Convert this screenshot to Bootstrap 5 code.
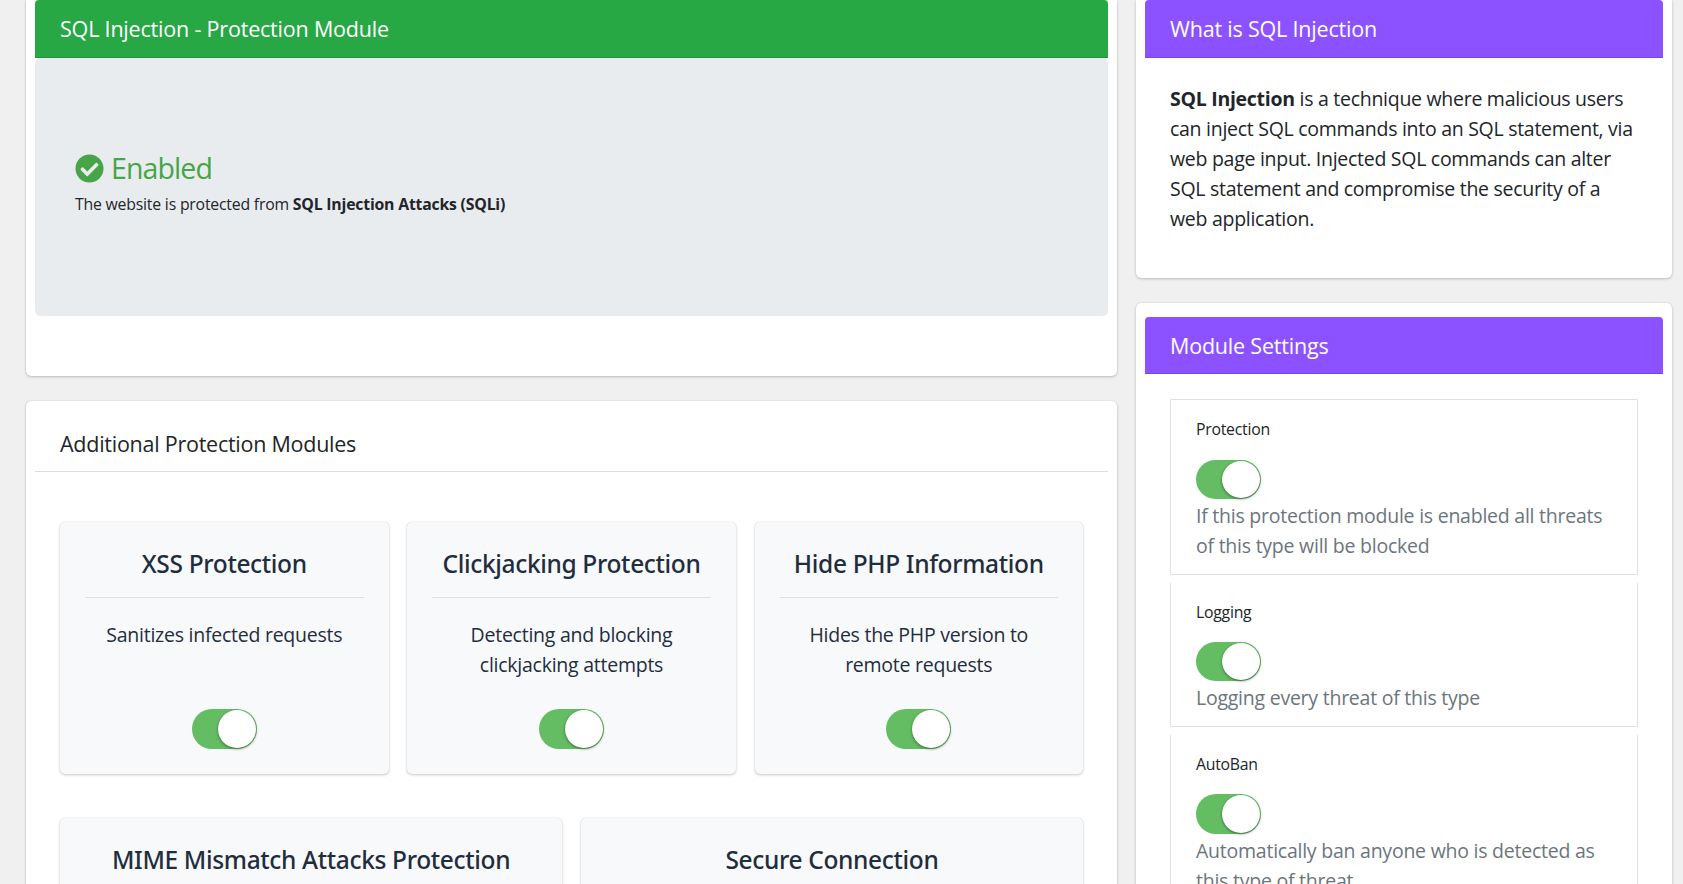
<!DOCTYPE html>
<html lang="en">
<head>
<meta charset="utf-8">
<meta name="viewport" content="width=device-width, initial-scale=1">
<title>SQL Injection - Protection Module</title>
<link href="https://cdn.jsdelivr.net/npm/bootstrap@5.3.0/dist/css/bootstrap.min.css" rel="stylesheet">
<style>
  body { background: #f0f0f0; color: #212529; font: 400 19.5px/30px "Open Sans", "Noto Sans", sans-serif; letter-spacing: -.28px; height: 884px; overflow: hidden; }
  .page { display: grid; grid-template-columns: 1091px 536px; column-gap: 19px; padding-left: 26px; height: 884px; overflow: hidden; }
  .panel { background: #fff; border: 0; border-radius: 5px; box-shadow: 0 0 1px rgba(0,0,0,.2), 0 1px 3px rgba(0,0,0,.2); padding: 14px 9px 0; margin-bottom: 25px; --bs-card-color: #212529; }
  .panel-first { padding-top: 0; border-radius: 0 0 5px 5px; }
  .panel-intro { height: 376px; }
  .panel-about { height: 278px; }
  .panel-head { height: 57px; padding: 14px 25px 0; border-bottom: 1px solid rgba(0,0,0,.13); border-radius: 4px 4px 0 0; font-size: 21.5px; line-height: 29px; letter-spacing: -.19px; }
  .panel-first .panel-head { height: 58px; }
  .head-plain { border-radius: 0; letter-spacing: -.25px; }
  .head-green { background: #28a745; color: #fff; }
  .head-purple { background: #8c52ff; color: #fff; }
  .status { background: #e9ecef; border-radius: 5px; height: 258px; padding: 90px 40px 0; font-size: 15.8px; line-height: 24px; letter-spacing: -.2px; }
  .status-title { color: #47a447; font-size: 28.5px; line-height: 40px; letter-spacing: -.9px; gap: 7px; margin-bottom: 4px; }
  .modules-wrap { padding: 50px 25px 0; }
  .modules { --bs-gutter-x: 18.75px; }
  .second-row { margin-top: 44px; }
  .module { background: #f8f9fb; color: #1f2d3d; border: 0; border-radius: 5px; box-shadow: 0 0 1px rgba(0,0,0,.18), 0 1px 3px rgba(0,0,0,.2); padding: 25px 25px 0; height: 252px; text-align: center; }
  .module h5 { font: 500 24.5px/34px "Noto Sans", "Open Sans", sans-serif; letter-spacing: -.35px; margin: 0 0 16px; }
  .module hr { margin: 0; border-top: 1px solid #dcdfe3; opacity: 1; }
  .module p { height: 60px; margin: 22px 0 29px; letter-spacing: -.25px; }
  .switcher { display: block; width: 65px; height: 40px; border-radius: 20px; background: #64bd63; padding: 1px 1px 1px 26px; }
  .switcher::after { content: ""; display: block; width: 38px; height: 38px; border-radius: 50%; background: #fff; box-shadow: 0 1px 3px rgba(0,0,0,.45); }
  .about { padding: 26px 25px 0; white-space: nowrap; }
  .settings { padding: 25px 25px 0; white-space: nowrap; }
  .setting { border: 1px solid #dee2e6; padding: 16px 25px 13px; margin-bottom: 8px; }
  .setting + .setting { border-top: 0; }
  .setting-name { font-size: 15.8px; line-height: 27px; letter-spacing: -.25px; }
  .setting .switcher { height: 39px; margin: 16px 0 2px; }
  .setting:first-child .switcher { margin-top: 17px; }
  .setting .switcher::after { height: 37px; }
  .setting:last-child .switcher { height: 40px; }
  .setting:last-child .switcher::after { height: 38px; }
  .setting-help { color: #6c757d; letter-spacing: -.24px; }
</style>
</head>
<body>
<main class="page">
  <div>
    <section class="card panel panel-first panel-intro">
      <div class="panel-head head-green">SQL Injection - Protection Module</div>
      <div class="status">
        <div class="status-title d-flex align-items-center">
          <svg width="29" height="29" viewBox="0 0 512 512" fill="currentColor" aria-hidden="true"><path d="M504 256c0 137-111 248-248 248S8 393 8 256 119 8 256 8s248 111 248 248zM227.300 387.300l184-184c6.200-6.200 6.200-16.400 0-22.600l-22.600-22.600c-6.200-6.200-16.400-6.200-22.600 0L216 308.100l-70.100-70.100c-6.200-6.200-16.400-6.200-22.600 0l-22.600 22.600c-6.200 6.200-6.200 16.400 0 22.600l104 104c6.200 6.300 16.400 6.300 22.600.1z"/></svg>
          <span>Enabled</span>
        </div>
        <div>The website is protected from <b>SQL Injection Attacks (SQLi)</b></div>
      </div>
    </section>

    <section class="card panel">
      <div class="panel-head head-plain">Additional Protection Modules</div>
      <div class="modules-wrap">
        <div class="row modules">
          <div class="col-4"><div class="module"><h5>XSS Protection</h5><hr><p>Sanitizes infected requests</p><span class="switcher mx-auto"></span></div></div>
          <div class="col-4"><div class="module"><h5>Clickjacking Protection</h5><hr><p>Detecting and blocking<br>clickjacking attempts</p><span class="switcher mx-auto"></span></div></div>
          <div class="col-4"><div class="module"><h5>Hide PHP Information</h5><hr><p>Hides the PHP version to<br>remote requests</p><span class="switcher mx-auto"></span></div></div>
        </div>
        <div class="row modules second-row">
          <div class="col-6"><div class="module"><h5>MIME Mismatch Attacks Protection</h5><hr></div></div>
          <div class="col-6"><div class="module"><h5>Secure Connection</h5><hr></div></div>
        </div>
      </div>
    </section>
  </div>

  <div>
    <section class="card panel panel-first panel-about">
      <div class="panel-head head-purple">What is SQL Injection</div>
      <div class="about"><b>SQL Injection</b> is a technique where malicious users<br>can inject SQL commands into an SQL statement, via<br>web page input. Injected SQL commands can alter<br>SQL statement and compromise the security of a<br>web application.</div>
    </section>

    <section class="card panel">
      <div class="panel-head head-purple">Module Settings</div>
      <div class="settings">
        <div class="setting"><div class="setting-name">Protection</div><span class="switcher"></span><div class="setting-help">If this protection module is enabled all threats<br>of this type will be blocked</div></div>
        <div class="setting"><div class="setting-name">Logging</div><span class="switcher"></span><div class="setting-help">Logging every threat of this type</div></div>
        <div class="setting"><div class="setting-name">AutoBan</div><span class="switcher"></span><div class="setting-help">Automatically ban anyone who is detected as<br>this type of threat</div></div>
      </div>
    </section>
  </div>
</main>
<script src="https://cdn.jsdelivr.net/npm/bootstrap@5.3.0/dist/js/bootstrap.bundle.min.js"></script>
</body>
</html>
